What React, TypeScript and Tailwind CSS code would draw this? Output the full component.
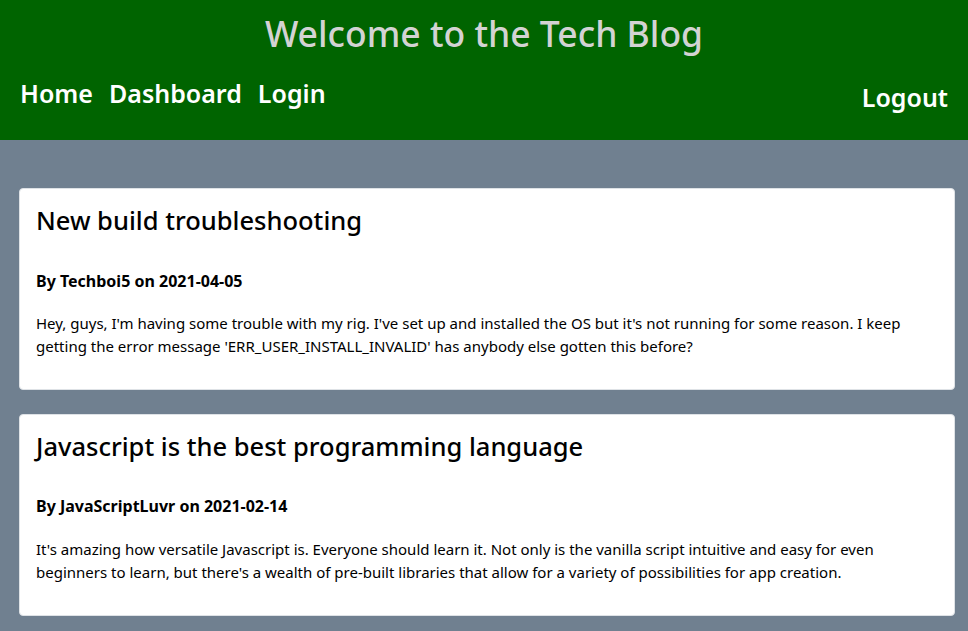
const posts = [
  {
    title: "New build troubleshooting",
    author: "Techboi5",
    date: "2021-04-05",
    body: "Hey, guys, I'm having some trouble with my rig. I've set up and installed the OS but it's not running for some reason. I keep getting the error message 'ERR_USER_INSTALL_INVALID' has anybody else gotten this before?",
  },
  {
    title: "Javascript is the best programming language",
    author: "JavaScriptLuvr",
    date: "2021-02-14",
    body: "It's amazing how versatile Javascript is. Everyone should learn it. Not only is the vanilla script intuitive and easy for even beginners to learn, but there's a wealth of pre-built libraries that allow for a variety of possibilities for app creation.",
  },
];

export default function App() {
  return (
    <div className="min-h-[631px] bg-[#708090] font-['Noto_Sans',sans-serif] text-[#212529]">
      <header className="h-[140px] bg-[#006400] px-5">
        <h1 className="pt-[12px] text-center text-[35.5px] font-medium leading-[1.2] text-[#d3d3d3]">
          Welcome to the Tech Blog
        </h1>
        <nav className="mt-[23px] flex items-start justify-between">
          <div className="flex gap-4 text-[25px] font-semibold leading-[1.2] text-white">
            <a href="#">Home</a>
            <a href="#">Dashboard</a>
            <a href="#">Login</a>
          </div>
          <a href="#" className="mt-[4px] text-[25px] font-semibold leading-[1.2] text-white">
            Logout
          </a>
        </nav>
      </header>

      <main className="flex flex-col gap-[24px] pl-[19px] pr-[13px] pt-[48px] pb-4">
        {posts.map((p) => (
          <article
            key={p.title}
            className="rounded border border-[#dee2e6] bg-white px-4 pt-4 pb-[31px]"
          >
            <h3 className="text-[25.5px] font-medium leading-[1.2] text-black">{p.title}</h3>
            <h6 className="mt-[36px] text-[16px] font-bold leading-[1.2] text-black">
              By {p.author} on {p.date}
            </h6>
            <p className="mt-[21px] text-[15px] leading-[23px] text-black">{p.body}</p>
          </article>
        ))}
      </main>
    </div>
  );
}
